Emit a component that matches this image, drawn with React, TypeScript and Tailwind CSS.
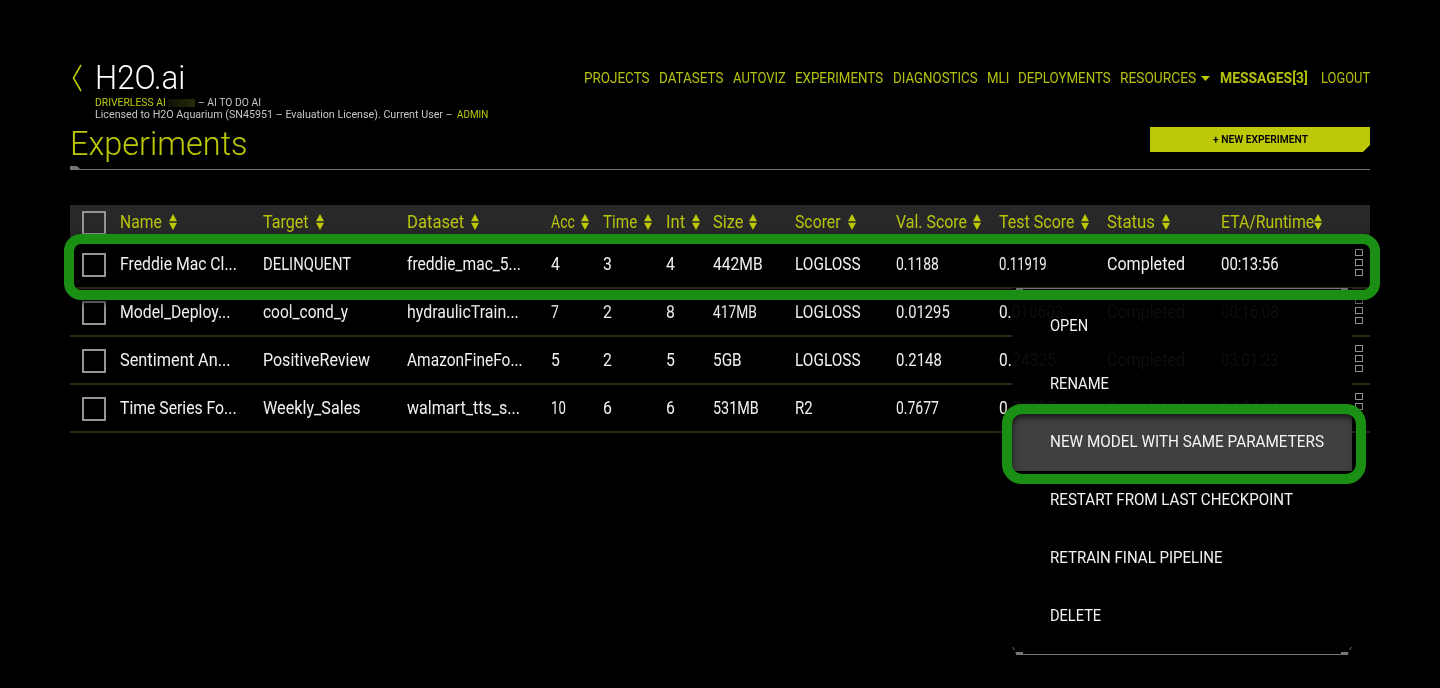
import { useLayoutEffect, useRef, useState } from "react";

type FitProps = { text: string; w: number; className?: string };

// Condenses a label horizontally so that it takes exactly `w` pixels.
function Fit({ text, w, className = "" }: FitProps) {
  const ref = useRef<HTMLSpanElement>(null);
  const [scale, setScale] = useState(1);
  useLayoutEffect(() => {
    const natural = ref.current ? ref.current.offsetWidth : 0;
    if (natural > 0) setScale(w / natural);
  }, [text, w]);
  return (
    <span className={`inline-block whitespace-nowrap ${className}`} style={{ width: w }}>
      <span ref={ref} className="inline-block origin-left" style={{ transform: `scaleX(${scale})` }}>
        {text}
      </span>
    </span>
  );
}

function SortIcon() {
  return (
    <svg width="8" height="16" viewBox="0 0 8 16" className="shrink-0 fill-[#bcc808]">
      <path d="M4 0 8 7.3H0zM4 16 0 8.7h8z" />
    </svg>
  );
}

function Checkbox() {
  return <span className="block size-6 border-2 border-[#959595]" />;
}

function Dots() {
  return (
    <span className="-mt-[3px] flex flex-col items-center">
      <span className="mb-[3px] h-[7px] w-2 border border-[#909090]" />
      <span className="mb-[3px] h-[7px] w-2 border border-[#909090]" />
      <span className="h-[7px] w-2 border border-[#909090]" />
    </span>
  );
}

const grid =
  "grid grid-cols-[50px_143px_144px_144px_52px_63px_47px_82px_101px_103px_108px_114px_149px]";

const headers: [string, number, number][] = [
  ["Name", 42, 6.5],
  ["Target", 46, 7],
  ["Dataset", 57, 7],
  ["Acc", 24, 6],
  ["Time", 34, 6.5],
  ["Int", 19, 7],
  ["Size", 30, 6],
  ["Scorer", 46, 7],
  ["Val. Score", 71, 6],
  ["Test Score", 76, 6],
  ["Status", 48, 7],
  ["ETA/Runtime", 93, 0],
];

const rows: [string, number][][] = [
  [["Freddie Mac Cl...", 117], ["DELINQUENT", 88], ["freddie_mac_5...", 114], ["4", 9], ["3", 9], ["4", 9], ["442MB", 50], ["LOGLOSS", 66], ["0.1188", 43], ["0.11919", 48], ["Completed", 78], ["00:13:56", 58]],
  [["Model_Deploy...", 110], ["cool_cond_y", 85], ["hydraulicTrain...", 112], ["7", 8], ["2", 9], ["8", 9], ["417MB", 44], ["LOGLOSS", 66], ["0.01295", 54], ["0.010603", 64], ["Completed", 78], ["00:16:08", 58]],
  [["Sentiment An...", 111], ["PositiveReview", 107], ["AmazonFineFo...", 116], ["5", 9], ["2", 9], ["5", 9], ["5GB", 29], ["LOGLOSS", 66], ["0.2148", 46], ["0.24325", 57], ["Completed", 78], ["03:01:23", 58]],
  [["Time Series Fo...", 117], ["Weekly_Sales", 98], ["walmart_tts_s...", 113], ["10", 15], ["6", 9], ["6", 9], ["531MB", 46], ["R2", 18], ["0.7677", 43], ["0.78335", 57], ["Completed", 78], ["04:54:28", 60]],
];

const nav: [string, number, string][] = [
  ["PROJECTS", 65.5, "mr-[9.5px]"],
  ["DATASETS", 64.5, "mr-[9.5px]"],
  ["AUTOVIZ", 53, "mr-[9.5px]"],
  ["EXPERIMENTS", 88, "mr-[9.5px]"],
  ["DIAGNOSTICS", 85, "mr-[9px]"],
  ["MLI", 22, "mr-[9.5px]"],
  ["DEPLOYMENTS", 92.5, "mr-[9.5px]"],
  ["RESOURCES", 76, "mr-[5px]"],
];

const menu: [string, number, boolean][] = [
  ["OPEN", 38, false],
  ["RENAME", 59, false],
  ["NEW MODEL WITH SAME PARAMETERS", 274, true],
  ["RESTART FROM LAST CHECKPOINT", 242.5, false],
  ["RETRAIN FINAL PIPELINE", 172.5, false],
  ["DELETE", 51.5, false],
];

function Header() {
  return (
    <header className="flex h-[62px] justify-between">
      <div className="flex">
        <svg width="10" height="28" viewBox="0 0 10 28" className="mt-[2px] ml-[2px] fill-none stroke-[#bcc808]">
          <path d="M9 1 1.5 14 9 27" strokeWidth="1.6" />
        </svg>
        <div className="ml-[13px] flex flex-col">
          <h1 className="h-[34px] text-[33px] leading-8 font-[350] text-white">
            <Fit text="H2O.ai" w={90} />
          </h1>
          <div className="mt-px flex h-3 items-center text-[10.5px] leading-3 text-[#c6c6c6]">
            <Fit text="DRIVERLESS AI" w={71} className="text-[#bcc808]" />
            <span className="mx-[2px] h-2 w-[27px] bg-linear-to-r from-[#101104] to-[#292b0b]" />
            <Fit text="– AI TO DO AI" w={63} className="ml-px" />
          </div>
          <div className="flex h-3 items-center text-[10.5px] leading-3 text-[#c6c6c6]">
            <Fit text="Licensed to H2O Aquarium (SN45951 – Evaluation License). Current User –" w={358} />
            <Fit text="ADMIN" w={31} className="ml-[4px] text-[#bcc808]" />
          </div>
        </div>
      </div>
      <nav className="mt-[6px] flex h-5 items-center text-[15px] leading-5 text-[#b4c00f]">
        {nav.map(([label, w, gap]) => (
          <Fit key={label} text={label} w={w} className={gap} />
        ))}
        <svg width="9" height="5" viewBox="0 0 9 5" className="mr-[10px] fill-[#bcc808]">
          <path d="M0 0h9L4.5 5z" />
        </svg>
        <Fit text="MESSAGES[3]" w={88} className="mr-[13px] font-bold" />
        <Fit text="LOGOUT" w={49} />
      </nav>
    </header>
  );
}

function MenuEdge({ flip }: { flip?: boolean }) {
  return (
    <svg width="340" height="9" viewBox="0 0 340 9" className={flip ? "block -scale-y-100" : "block"}>
      <path d="M4 8.5H336" className="fill-none stroke-[#777777]" />
      <path d="M3 6h8v3H5zM337 6h-8v3h6z" className="fill-[#777777]" />
      <path d="M.5 1 2.5 4M339.5 1 337.5 4" className="fill-none stroke-[#666666]" />
    </svg>
  );
}

export default function App() {
  return (
    <div className="relative h-[688px] w-[1440px] overflow-hidden bg-black px-[70px] pt-[62px] font-[Roboto,sans-serif]">
      <Header />
      <div className="flex h-[42px] items-start justify-between">
        <h2 className="text-[33px] leading-[40px] font-[350] text-[#bcc808]">
          <Fit text="Experiments" w={178} />
        </h2>
        <button className="mt-[3px] flex h-[25px] w-[220px] items-center justify-center bg-[#bcc808] pt-px text-[11px] font-semibold text-black [clip-path:polygon(0_0,100%_0,100%_18px,213px_100%,0_100%)]">
          <Fit text="+ NEW EXPERIMENT" w={95} />
        </button>
      </div>
      <div className="flex h-1 flex-col justify-end border-b border-[#747474]">
        <span className="h-[3px] w-[10px] bg-[#747474] [clip-path:polygon(0_0,7px_0,100%_100%,0_100%)]" />
      </div>

      <main className="mt-[35px] text-[17.5px] leading-5">
        <div className={`${grid} h-9 items-center bg-[#282828] text-[#b8c40c]`}>
          <span className="pl-3">
            <Checkbox />
          </span>
          {headers.map(([label, w, gap]) => (
            <span key={label} className="flex items-center pb-[2px]">
              <Fit text={label} w={w} />
              <span style={{ width: gap }} />
              <SortIcon />
            </span>
          ))}
        </div>
        {rows.map((cells, r) => (
          <div key={r} className={`${grid} h-12 items-center border-b-2 border-[#2b2c18] text-[#f0f0f0]`}>
            <span className="pt-[2px] pl-3">
              <Checkbox />
            </span>
            {cells.map(([text, w], c) => (
              <span key={c} className={c === 11 ? "flex items-center justify-between pr-[7px]" : ""}>
                <Fit text={text} w={w} />
                {c === 11 && <Dots />}
              </span>
            ))}
          </div>
        ))}
      </main>

      <div className="absolute top-[288px] left-[1012px] w-[340px] bg-black/95">
        <MenuEdge flip />
        {menu.map(([label, w, active]) => (
          <div
            key={label}
            className={`flex h-[58px] items-center pb-[2px] pl-[38px] text-[17px] leading-5 text-[#f4f4f4] ${active ? "bg-[#404040]" : ""}`}
          >
            <Fit text={label} w={w} />
          </div>
        ))}
        <div className="pt-px">
          <MenuEdge />
        </div>
      </div>

      <div className="absolute top-[234px] left-[64px] h-[66px] w-[1316px] rounded-[17px] border-10 border-[#1b8f14] drop-shadow-[0_3px_3px_rgba(0,0,0,0.7)]" />
      <div className="absolute top-[404px] left-[1002px] h-20 w-[364px] rounded-[20px] border-10 border-[#1b8f14] drop-shadow-[0_3px_3px_rgba(0,0,0,0.7)]" />
    </div>
  );
}
